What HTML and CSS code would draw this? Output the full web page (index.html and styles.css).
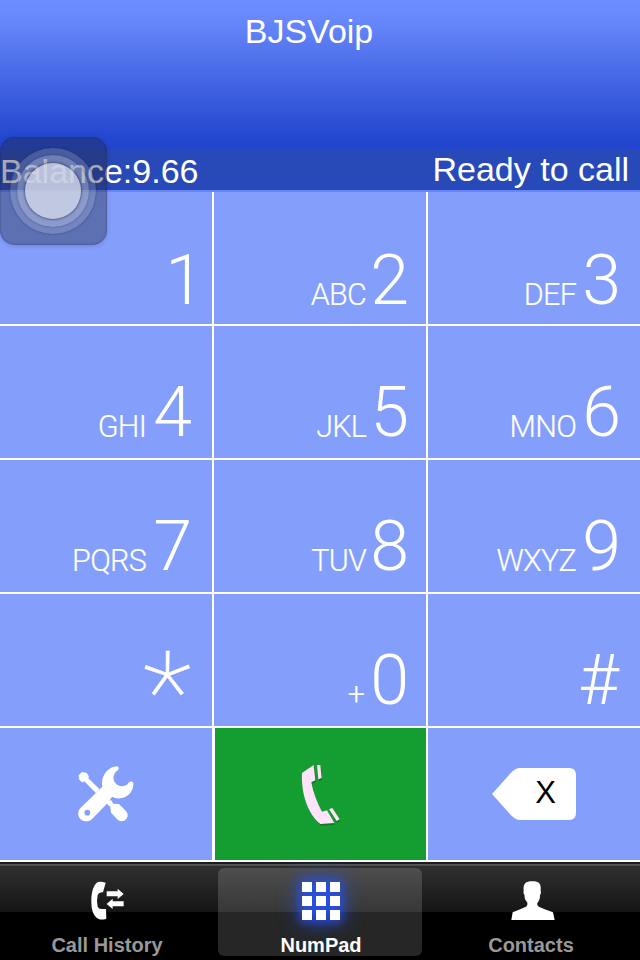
FILE: index.html
```html
<!DOCTYPE html>
<html lang="en">

<head>
    <meta charset="UTF-8">
    <meta name="viewport" content="width=device-width, initial-scale=1.0">
    <title>BJSVoip</title>
    <link rel="stylesheet" href="styles.css">
</head>

<body>

    <header class="header">
        <h1>BJSVoip</h1>
        <div class="status-bar">
            <span class="balance">Balance:9.66</span>
            <span class="status">Ready to call</span>
        </div>
    </header>

    <main class="keypad">
        <button class="key key-top key-one"><span class="digit">1</span></button>
        <button class="key key-top"><span class="letters">ABC</span><span class="digit">2</span></button>
        <button class="key key-top key-right"><span class="letters">DEF</span><span class="digit">3</span></button>

        <button class="key key-left"><span class="letters">GHI</span><span class="digit">4</span></button>
        <button class="key"><span class="letters">JKL</span><span class="digit">5</span></button>
        <button class="key key-right"><span class="letters">MNO</span><span class="digit">6</span></button>

        <button class="key key-left"><span class="letters">PQRS</span><span class="digit">7</span></button>
        <button class="key"><span class="letters">TUV</span><span class="digit">8</span></button>
        <button class="key key-right"><span class="letters">WXYZ</span><span class="digit">9</span></button>

        <button class="key key-star"><span class="digit">*</span></button>
        <button class="key"><span class="letters plus">+</span><span class="digit">0</span></button>
        <button class="key key-hash"><span class="digit">#</span></button>

        <button class="action settings" aria-label="Settings">
            <svg width="100" height="90" viewBox="0 0 300 270">
                <path d="M57 76 L66 67 L80 70 L86 80 L84 85 L118 118 L108 128 L74 94 L66 96 L58 88 Z" fill="#fff" stroke="#fff" stroke-width="2" stroke-linejoin="round" />
                <path d="M142 153 L154 151 L160 161 L177 162 L198 183 Q208 196 199 207 Q187 219 173 209 L153 188 L151 171 L139 160 Z" fill="#fff" />
                <path d="M171 49 Q179 51 175 59 C157 71 158 89 166 99 C179 115 199 109 206 98 Q213 91 220 98 C222 120 206 143 180 145 Q166 146 156 140 L146 156 L97 206 C88 216 71 217 61 207 C52 198 53 182 62 173 L114 123 L127 110 C122 82 140 51 171 49 Z" fill="#fff" />
                <circle cx="82" cy="188" r="8.5" fill="#849efb" />
            </svg>
        </button>
        <button class="action call" aria-label="Call">
            <svg width="100" height="100" viewBox="0 0 300 300">
                <g fill="#0b6d1d" transform="translate(2 5)" opacity=".7">
                    <path d="M131 75 L96 99 C93 158 112 221 151 252 L193 249 L171 211 L156 215 C142 190 130 159 124 127 L136 121 Z" />
                    <path d="M141 75 H151 L155 114 L145 118 Z" />
                    <path d="M177 208 L187 204 L209 238 L200 243 Z" />
                </g>
                <g fill="#ffe3fb">
                    <path d="M131 75 L96 99 C93 158 112 221 151 252 L193 249 L171 211 L156 215 C142 190 130 159 124 127 L136 121 Z" />
                    <path d="M141 75 H151 L155 114 L145 118 Z" />
                    <path d="M177 208 L187 204 L209 238 L200 243 Z" />
                </g>
            </svg>
        </button>
        <button class="action delete" aria-label="Delete">
            <svg width="84" height="52" viewBox="0 0 84 52">
                <path d="M0 26 L17 7 Q23 0 27 0 H77 Q84 0 84 7 V45 Q84 52 77 52 H27 Q23 52 17 45 Z" fill="#fff" />
                <text x="53.5" y="35" text-anchor="middle">X</text>
            </svg>
        </button>
    </main>

    <nav class="tab-bar">
        <a class="tab tab-history">
            <svg width="40" height="40" viewBox="0 0 120 120" fill="#fff">
                <path d="M27 3 Q36 0 50 5 L42 34 Q30 32 26 42 Q22 60 26 77 Q29 85 40 84 L51 84 L52 113 Q39 118 29 114 C11 104 7 84 7 59 C7 36 12 12 27 3 Z" />
                <path d="M53 31 H86 V23 L104 39 L86 54 V46 H53 Z" />
                <path d="M104 61 H71 V53 L53 69 L71 84 V76 H104 Z" />
            </svg>
            <span>Call History</span>
        </a>
        <a class="tab tab-numpad active">
            <svg width="40" height="40" viewBox="0 0 40 40" fill="#fff">
                <path d="M1 1h10v10H1zM15 1h10v10H15zM29 1h10v10H29zM1 15h10v10H1zM15 15h10v10H15zM29 15h10v10H29zM1 29h10v10H1zM15 29h10v10H15zM29 29h10v10H29z" />
            </svg>
            <span>NumPad</span>
        </a>
        <a class="tab tab-contacts">
            <svg width="44" height="40" viewBox="0 0 132 120" fill="#fff">
                <path d="M1 117 L5 94 Q29 85 41 79 Q51 75 49 65 Q39 53 40 41 Q36 38 38 28 C36 8 44 1 64 1 C84 1 91 8 89 29 Q92 37 87 43 Q88 56 79 66 Q77 75 87 79 Q99 85 126 94 L131 117 Z" />
            </svg>
            <span>Contacts</span>
        </a>
    </nav>

    <!-- floating touch button, sits over the page -->
    <div class="touch-button">
        <div class="ring">
            <div class="ring-inner">
                <div class="knob"></div>
            </div>
        </div>
    </div>

</body>

</html>
```
FILE: styles.css
```css
:root {
    --helvetica: "Liberation Sans", Arial, sans-serif;
    --roboto: Roboto, sans-serif;
    --key-bg: #849efb;
    --status-bg: #2849b8;
    --call-bg: #149e31;
}

* {
    margin: 0;
    padding: 0;
    box-sizing: border-box;
}

body {
    width: 640px;
    height: 960px;
    overflow: hidden;
    position: relative;
    display: flex;
    flex-direction: column;
    background-color: black;
    color: white;
    font-family: var(--helvetica);
}

.header {
    height: 192px;
    display: flex;
    flex-direction: column;
    justify-content: space-between;
    background: linear-gradient(#6c8dff 0, #6787fb 20px, #2448d0 136px, #2145cc 149px);
    border-bottom: 2px solid #6586fb;
    text-align: center;
}

.header h1 {
    padding-top: 11px;
    padding-right: 22px;
    font-weight: 400;
    font-size: 34px;
    line-height: 40px;
}

.status-bar {
    height: 41px;
    display: flex;
    justify-content: space-between;
    padding-right: 11px;
    background-color: var(--status-bg);
    font-size: 34px;
    line-height: 40px;
}

.balance {
    padding-top: 2px;
}

.keypad {
    height: 670px;
    display: grid;
    grid-template-columns: repeat(3, 212px);
    grid-template-rows: repeat(5, 132px);
    gap: 2px;
    background-color: white;
}

.key,
.action {
    border: none;
    background-color: var(--key-bg);
    color: white;
}

.key {
    display: flex;
    justify-content: flex-end;
    align-items: flex-start;
    padding: 45px 17px 0 0;
    font-family: var(--roboto);
    font-weight: 300;
}

.digit {
    font-size: 70px;
    line-height: 82px;
}

.letters {
    margin-right: 4px;
    padding-top: 38px;
    font-size: 30.5px;
    line-height: 36px;
    letter-spacing: -0.7px;
    -webkit-text-stroke: 0.2px white;
}

.plus {
    margin-right: 6px;
}

.key-top {
    padding-top: 47px;
}

.key-left {
    padding-right: 20px;
}

.key-left .letters {
    margin-right: 7px;
}

.key-right {
    padding-right: 19px;
}

.key-right .letters {
    margin-right: 6px;
}

.key-one {
    padding-right: 8px;
}

.key-hash {
    padding-right: 21px;
}

.key-star {
    padding-top: 58px;
    padding-right: 21px;
}

.key-star .digit {
    font-size: 114px;
    font-weight: 100;
    -webkit-text-stroke: 0.6px white;
}

.action {
    display: flex;
    justify-content: center;
    align-items: center;
}

.settings {
    padding: 2px 0 0 8px;
}

.call {
    margin-left: 1px;
    padding: 0 2px 8px 0;
    background-color: var(--call-bg);
}

.delete text {
    font-family: var(--helvetica);
    font-size: 31px;
    fill: black;
}

.tab-bar {
    height: 98px;
    display: grid;
    grid-template-columns: 204px 204px 204px;
    column-gap: 10px;
    padding: 4px 4px 4px;
    border-top: 2px solid #1c1c1f;
    background: linear-gradient(#5c5c5c 0, #454545 2px, #303030 2px, #151515 48px, black 48px);
}

.tab {
    display: flex;
    flex-direction: column;
    align-items: center;
    padding-top: 13px;
    border-radius: 6px;
    color: #999;
    font-size: 20px;
    font-weight: 700;
}

.tab span {
    margin-top: 13px;
    line-height: 22px;
}

.tab-history {
    padding-left: 2px;
}

.tab-history svg {
    margin-left: 4px;
}

.tab-numpad {
    padding-left: 2px;
}

.tab-contacts {
    padding-right: 6px;
}

.tab-contacts svg {
    margin-left: 4px;
}

.active {
    background-color: rgba(255, 255, 255, 0.15);
    color: white;
}

.active svg {
    overflow: visible;
    filter: drop-shadow(0 0 5px #2454ff) drop-shadow(0 0 10px #2454ff);
}

.touch-button {
    position: absolute;
    top: 137px;
    left: 0;
    width: 107px;
    height: 108px;
    display: flex;
    justify-content: center;
    align-items: center;
    padding-right: 1px;
    border-radius: 15px;
    background-color: rgba(36, 42, 70, 0.4);
    box-shadow: inset 0 0 2px rgba(20, 30, 80, 0.6), 0 1px 4px rgba(20, 30, 80, 0.2);
}

.ring,
.ring-inner,
.knob {
    display: flex;
    justify-content: center;
    align-items: center;
    border-radius: 50%;
}

.ring {
    width: 86px;
    height: 86px;
    background-color: rgba(200, 210, 235, 0.22);
    box-shadow: 0 0 2px rgba(20, 30, 80, 0.6);
}

.ring-inner {
    width: 72px;
    height: 72px;
    background-color: rgba(200, 210, 235, 0.3);
    box-shadow: 0 0 2px rgba(20, 30, 80, 0.5);
}

.knob {
    width: 56px;
    height: 56px;
    background-color: rgba(215, 220, 235, 0.7);
    box-shadow: 0 0 3px rgba(10, 20, 60, 0.9);
}
```
